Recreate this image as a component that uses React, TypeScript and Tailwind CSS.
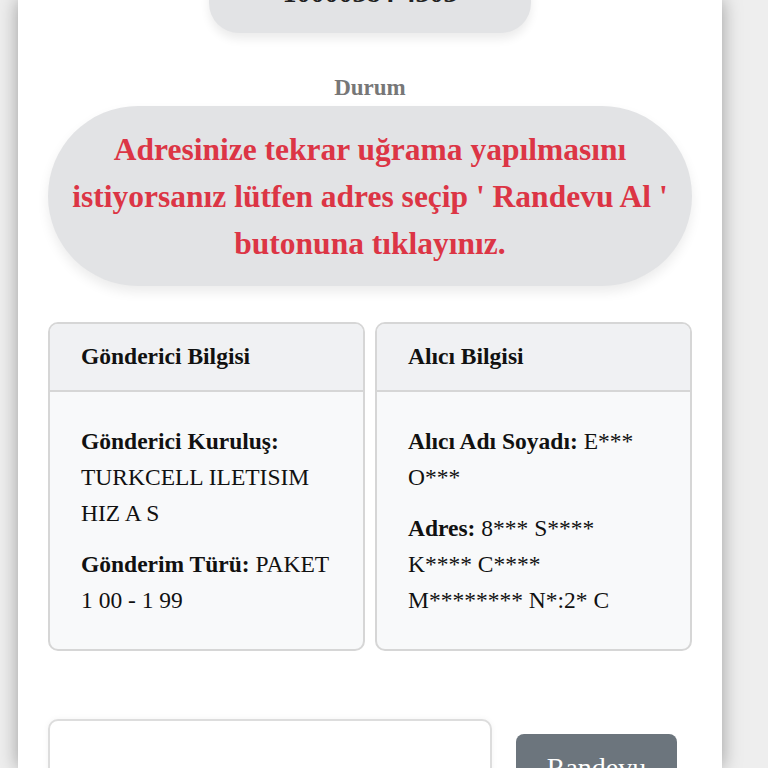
import React from "react";

export default function App() {
  return (
    <div
      className="h-[768px] w-[768px] overflow-hidden bg-[#eeeeee]"
      style={{ fontFamily: '"Liberation Serif", "Times New Roman", serif' }}
    >
      <div className="ml-[18px] flex h-[768px] w-[704px] flex-col bg-white px-[30px] shadow-[0_0_18px_rgba(0,0,0,0.35)]">
        {/* top pill (cut off) */}
        <div className="mx-auto -mt-[37px] flex h-[70px] w-[322px] shrink-0 items-center justify-center rounded-[30px] bg-[#e2e3e5] text-[28px] font-bold text-[#222] shadow-[0_6px_10px_rgba(0,0,0,0.08)]">
          <span className="relative top-[-5px]">10000384 4303</span>
        </div>

        <div className="mt-[41px] text-center text-[23px] font-bold leading-[28px] text-[#777777]">
          Durum
        </div>

        <div className="mt-[4px] flex h-[180px] shrink-0 items-center justify-center rounded-full bg-[#e2e3e5] px-[10px] text-center text-[31.5px] font-bold leading-[47px] text-[#dc3545] shadow-[0_6px_12px_rgba(0,0,0,0.08)]">
          <p>
            Adresinize tekrar uğrama yapılmasını
            <br />
            istiyorsanız lütfen adres seçip ' Randevu Al '
            <br />
            butonuna tıklayınız.
          </p>
        </div>

        <div className="mt-[36px] grid shrink-0 grid-cols-2 gap-[10px]">
          <div className="overflow-hidden rounded-[10px] border-2 border-[#d6d6d6] bg-[#f8f9fa]">
            <div className="flex h-[68px] items-center border-b-2 border-[#d6d6d6] bg-[#f0f1f3] px-[31px] text-[23.5px] font-bold text-[#111]">
              Gönderici Bilgisi
            </div>
            <div className="px-[31px] pb-[16px] pt-[31px] text-[23.5px] leading-[36px] text-[#111]">
              <p className="mb-[15px]">
                <b>Gönderici Kuruluş:</b>
                <br />
                TURKCELL ILETISIM
                <br />
                HIZ A S
              </p>
              <p className="mb-[15px]">
                <b>Gönderim Türü:</b> PAKET
                <br />1 00 - 1 99
              </p>
            </div>
          </div>
          <div className="overflow-hidden rounded-[10px] border-2 border-[#d6d6d6] bg-[#f8f9fa]">
            <div className="flex h-[68px] items-center border-b-2 border-[#d6d6d6] bg-[#f0f1f3] px-[31px] text-[23.5px] font-bold text-[#111]">
              Alıcı Bilgisi
            </div>
            <div className="px-[31px] pb-[16px] pt-[31px] text-[23.5px] leading-[36px] text-[#111]">
              <p className="mb-[15px] whitespace-nowrap">
                <b>Alıcı Adı Soyadı:</b> E***
                <br />
                O***
              </p>
              <p className="mb-[15px] whitespace-nowrap">
                <b>Adres:</b> 8*** S****
                <br />
                K**** C****
                <br />
                M******** N*:2* C
              </p>
            </div>
          </div>
        </div>

        <div className="mt-[68px] flex shrink-0 items-start">
          <div className="h-[120px] w-[444px] rounded-[10px] border-2 border-[#dddddd] bg-white shadow-[0_0_6px_rgba(0,0,0,0.05)]" />
          <button className="ml-[24px] mt-[15px] h-[80px] w-[161px] rounded-[8px] bg-[#6c757d] text-[28px] text-white">
            <span className="relative top-[-6px]">Randevu</span>
          </button>
        </div>
      </div>
    </div>
  );
}
